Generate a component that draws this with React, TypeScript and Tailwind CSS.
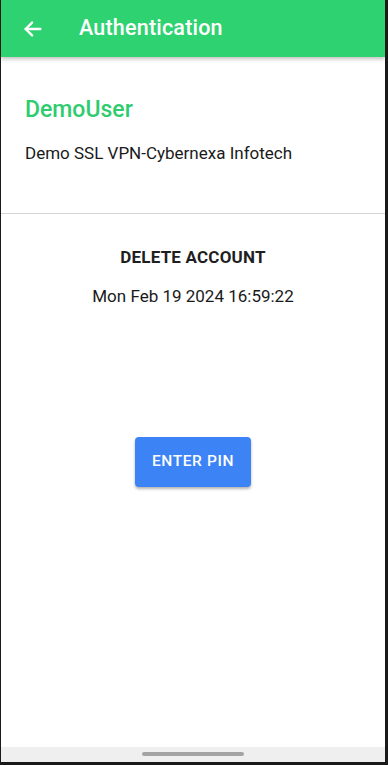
import React from "react";

export default function App() {
  return (
    <div className="w-[388px] h-[765px] bg-[#1a1a1a] pl-[1px] pr-[3px] pb-[3px] flex" style={{ fontFamily: "Roboto, 'Noto Sans', sans-serif" }}>
      <div className="flex-1 bg-white flex flex-col overflow-hidden">
        <div className="h-[57px] bg-[#2fd270] flex items-center shadow-[0_2px_4px_rgba(0,0,0,0.25)] relative z-10">
          <svg className="ml-[21px] w-[22px] h-[22px]" viewBox="0 0 24 24" fill="none" stroke="white" strokeWidth="2.6" strokeLinecap="round" strokeLinejoin="round">
            <path d="M20 12H4" />
            <path d="M11 5l-7 7 7 7" />
          </svg>
          <span className="ml-[35px] text-white text-[21.5px] font-medium tracking-[0.2px]">Authentication</span>
        </div>
        <div className="px-[24px] pt-[38px]">
          <div className="text-[#2fcc6f] text-[23px] leading-[30px] font-medium">DemoUser</div>
          <div className="mt-[17px] text-[17px] leading-[22px] text-[#1a1a1a]">Demo SSL VPN-Cybernexa Infotech</div>
        </div>
        <div className="mt-[49px] h-[1px] bg-[#d5d5d5]" />
        <div className="flex flex-col items-center">
          <div className="mt-[32px] text-[17px] leading-[22px] font-bold text-[#1f1f1f] tracking-[0.2px]">DELETE ACCOUNT</div>
          <div className="mt-[17px] text-[17px] leading-[22px] text-[#1a1a1a]">Mon Feb 19 2024 16:59:22</div>
          <button className="mt-[130px] w-[116px] h-[50px] rounded-[4px] bg-[#3c83f6] text-white text-[15.5px] font-medium tracking-[0.6px] shadow-[0_2px_3px_rgba(0,0,0,0.3)]">ENTER PIN</button>
        </div>
        <div className="flex-1" />
        <div className="h-[15px] bg-[#efefef] flex justify-center items-start">
          <div className="mt-[5px] w-[102px] h-[4px] rounded-full bg-[#a3a3a3]" />
        </div>
      </div>
    </div>
  );
}
